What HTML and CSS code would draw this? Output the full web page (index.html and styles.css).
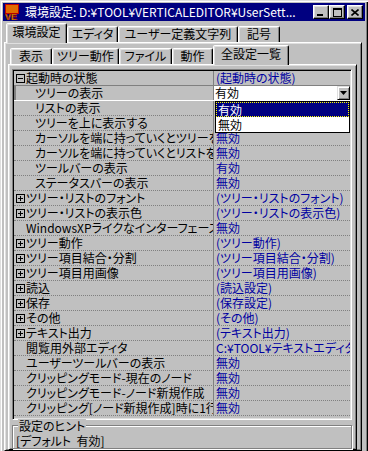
FILE: index.html
```html
<!DOCTYPE html>
<html lang="ja">
<head>
    <meta charset="UTF-8" />
    <title>環境設定</title>
    <link rel="stylesheet" href="styles.css">
</head>
<body>
<div class="window">
    <div class="titlebar">
        <svg class="app-icon" viewBox="0 0 16 16" width="16" height="16">
            <rect x="1" y="0" width="14" height="10" fill="#c00000"/>
            <path d="M3 1v8M5 1v8M7 1v8M9 1v8M11 1v8M13 1v8" stroke="#ffd800" stroke-width="1"/>
            <text x="1" y="15.5" font-family="Liberation Sans" font-size="9" font-weight="bold" fill="#ffd800" stroke="#900000" stroke-width="0.6">VE</text>
        </svg>
        <span class="title">環境設定: D:¥TOOL¥VERTICALEDITOR¥UserSett...</span>
        <div class="caption-buttons">
            <span class="cbtn min"><svg width="6" height="2"><rect width="6" height="2"/></svg></span>
            <span class="cbtn max"><svg width="9" height="9"><path d="M0 0h9v9H0z M1 2h7v6H1z" fill-rule="evenodd"/></svg></span>
            <span class="cbtn close"><svg width="8" height="7"><path d="M0.5 0.5l7 6M7.5 0.5l-7 6" stroke="#000" stroke-width="1.6"/></svg></span>
        </div>
    </div>

    <div class="tabs outer-tabs">
        <span class="tab active w-env">環境設定</span>
        <span class="tab w-edit">エディタ</span>
        <span class="tab w-user">ユーザー定義文字列</span>
        <span class="tab w-sym">記号</span>
    </div>

    <div class="panel outer-panel">
        <div class="tabs inner-tabs">
            <span class="tab w-view">表示</span>
            <span class="tab w-tree">ツリー動作</span>
            <span class="tab w-file">ファイル</span>
            <span class="tab w-act">動作</span>
            <span class="tab active w-all">全設定一覧</span>
        </div>

        <div class="panel inner-panel">
            <div class="grid">
                <div class="row"><span class="name group"><i class="toggle minus"></i>起動時の状態</span><span class="value">(起動時の状態)</span></div>
                <div class="row editing">
                    <span class="name child">ツリーの表示</span>
                    <span class="value combo">
                        <span class="combo-text">有効</span>
                        <span class="combo-btn"><svg width="7" height="4"><path d="M0 0h7l-3.5 4z"/></svg></span>
                        <span class="dropdown">
                            <span class="item selected">有効</span>
                            <span class="item">無効</span>
                        </span>
                    </span>
                </div>
                <div class="row"><span class="name child">リストの表示</span><span class="value">有効</span></div>
                <div class="row"><span class="name child">ツリーを上に表示する</span><span class="value">有効</span></div>
                <div class="row"><span class="name child">カーソルを端に持っていくとツリーを表示</span><span class="value">無効</span></div>
                <div class="row"><span class="name child">カーソルを端に持っていくとリストを表示</span><span class="value">無効</span></div>
                <div class="row"><span class="name child">ツールバーの表示</span><span class="value">有効</span></div>
                <div class="row"><span class="name child">ステータスバーの表示</span><span class="value">無効</span></div>
                <div class="row"><span class="name group"><i class="toggle"></i>ツリー・リストのフォント</span><span class="value">(ツリー・リストのフォント)</span></div>
                <div class="row"><span class="name group"><i class="toggle"></i>ツリー・リストの表示色</span><span class="value">(ツリー・リストの表示色)</span></div>
                <div class="row"><span class="name leaf">WindowsXPライクなインターフェースを使用</span><span class="value">無効</span></div>
                <div class="row"><span class="name group"><i class="toggle"></i>ツリー動作</span><span class="value">(ツリー動作)</span></div>
                <div class="row"><span class="name group"><i class="toggle"></i>ツリー項目結合・分割</span><span class="value">(ツリー項目結合・分割)</span></div>
                <div class="row"><span class="name group"><i class="toggle"></i>ツリー項目用画像</span><span class="value">(ツリー項目用画像)</span></div>
                <div class="row"><span class="name group"><i class="toggle"></i>読込</span><span class="value">(読込設定)</span></div>
                <div class="row"><span class="name group"><i class="toggle"></i>保存</span><span class="value">(保存設定)</span></div>
                <div class="row"><span class="name group"><i class="toggle"></i>その他</span><span class="value">(その他)</span></div>
                <div class="row"><span class="name group"><i class="toggle"></i>テキスト出力</span><span class="value">(テキスト出力)</span></div>
                <div class="row"><span class="name leaf">閲覧用外部エディタ</span><span class="value">C:¥TOOL¥テキストエディタ¥TextEditor.exe</span></div>
                <div class="row"><span class="name leaf">ユーザーツールバーの表示</span><span class="value">無効</span></div>
                <div class="row"><span class="name leaf">クリッピングモード-現在のノード</span><span class="value">無効</span></div>
                <div class="row"><span class="name leaf">クリッピングモード-ノード新規作成</span><span class="value">無効</span></div>
                <div class="row"><span class="name leaf">クリッピング[ノード新規作成]時に1行目をノード名にする</span><span class="value">無効</span></div>
            </div>

            <div class="hint">
                <span class="hint-label">設定のヒント</span>
                <div class="hint-text">[デフォルト&nbsp; 有効]</div>
            </div>
        </div>
    </div>
</div>
</body>
</html>
```

FILE: styles.css
```css
* {
    box-sizing: border-box;
}

body {
    margin: 0;
    background: #c0c0c0;
    font-family: "Noto Sans CJK JP", "Liberation Sans", sans-serif;
    font-size: 12px;
    line-height: 14px;
    font-feature-settings: "palt";
    color: #000;
}

.window {
    width: 368px;
    height: 451px;
    overflow: hidden;
    padding: 3px 3px 0 3px;
    display: flex;
    flex-direction: column;
    background: #c0c0c0;
    box-shadow: inset 1px 1px #dfdfdf, inset 2px 2px #fff, inset -1px 0 #000, inset -2px 0 #808080;
}

/* title bar */
.titlebar {
    height: 18px;
    flex: none;
    background: #000080;
    display: flex;
    align-items: center;
    padding-left: 1px;
}

.app-icon {
    flex: none;
    margin-right: 5px;
}

.title {
    flex: 1;
    color: #fff;
    white-space: nowrap;
    overflow-x: clip;
}

.caption-buttons {
    display: flex;
    margin-right: 2px;
}

.cbtn {
    width: 16px;
    height: 14px;
    background: #c0c0c0;
    border: 1px solid;
    border-color: #fff #000 #000 #fff;
    box-shadow: inset -1px -1px #808080, inset 1px 1px #dfdfdf;
    display: flex;
    align-items: center;
    justify-content: center;
}

.cbtn svg {
    display: block;
}

.cbtn.min {
    align-items: flex-end;
    justify-content: flex-start;
    padding: 0 0 2px 3px;
}

.cbtn.close {
    margin-left: 2px;
}

/* tabs */
.tabs {
    display: flex;
    align-items: flex-end;
    flex: none;
}

.outer-tabs {
    height: 21px;
    padding-left: 3px;
}

.inner-tabs {
    height: 20px;
    padding-left: 2px;
}

.tab {
    height: 16px;
    background: #c0c0c0;
    border: 1px solid;
    border-bottom: 0;
    border-color: #fff #000 transparent #fff;
    border-radius: 2px 2px 0 0;
    box-shadow: inset -1px 0 #808080, inset 1px 1px #dfdfdf;
    text-align: center;
    white-space: nowrap;
}

.tab.active {
    height: 20px;
    margin-bottom: -1px;
    padding-top: 1px;
    position: relative;
    z-index: 1;
}

.w-env { width: 61px; }
.w-edit { width: 51px; }
.w-user { width: 120px; }
.w-sym { width: 42px; }

.w-view { width: 42px; }
.w-tree { width: 67px; }
.w-file { width: 53px; }
.w-act { width: 41px; }
.w-all { width: 76px; }

/* panels */
.panel {
    border: 1px solid;
    border-color: #fff #000 #000 #fff;
    box-shadow: inset 1px 1px #dfdfdf, inset -1px -1px #808080;
    display: flex;
    flex-direction: column;
    flex: 1;
    min-height: 0;
}

.outer-panel {
    margin: 0 3px 0 1px;
    padding: 1px 4px 0 3px;
}

.inner-panel {
    padding: 4px 4px 0 3px;
}

/* settings grid */
.grid {
    flex: none;
    border: 1px solid;
    border-color: #808080 #fff #fff #808080;
    box-shadow: inset 1px 1px #000, inset -1px -1px #dfdfdf;
    padding: 1px 1px 3px 1px;
}

.row {
    display: flex;
    height: 15px;
    border-bottom: 1px dotted #808080;
}

.name {
    width: 200px;
    flex: none;
    display: flex;
    align-items: center;
    border-right: 1px solid #808080;
    white-space: nowrap;
    overflow-x: clip;
}

.name.group {
    padding-left: 2px;
}

.name.leaf {
    padding-left: 12px;
}

.name.child {
    padding-left: 21px;
}

.toggle {
    width: 9px;
    height: 9px;
    flex: none;
    margin-right: 1px;
    border: 1px solid #000;
    background:
        linear-gradient(#000, #000) center / 5px 1px no-repeat,
        linear-gradient(#000, #000) center / 1px 5px no-repeat;
}

.toggle.minus {
    background: linear-gradient(#000, #000) center / 5px 1px no-repeat;
}

.value {
    flex: 1;
    min-width: 0;
    padding-left: 2px;
    color: #0000a0;
    white-space: nowrap;
    overflow-x: clip;
}

/* row being edited */
.row.editing {
    height: 16px;
    margin-top: -1px;
    border-top: 1px solid #808080;
    border-bottom: 1px solid #fff;
}

.editing .name {
    box-shadow: inset 2px 0 #808080;
}

.combo {
    display: flex;
    padding-left: 1px;
    background: #fff;
    color: #000;
    overflow: visible;
    position: relative;
}

.combo-text {
    flex: 1;
}

.combo-btn {
    width: 13px;
    height: 14px;
    flex: none;
    background: #c0c0c0;
    border: 1px solid;
    border-color: #dfdfdf #000 #000 #dfdfdf;
    box-shadow: inset 1px 1px #fff, inset -1px -1px #808080;
    display: flex;
    align-items: center;
    justify-content: center;
}

.combo-btn svg {
    display: block;
}

.dropdown {
    position: absolute;
    top: 15px;
    left: 1px;
    right: 0;
    height: 32px;
    background: #fff;
    border: 1px solid #000;
    z-index: 5;
}

.dropdown .item {
    display: block;
    height: 15px;
    line-height: 13px;
    border: 1px solid transparent;
    padding-left: 1px;
}

.dropdown .item.selected {
    background: #000080;
    color: #fff;
    border: 1px dotted #ffff00;
}

/* hint box */
.hint {
    flex: 1;
    margin-top: 5px;
    border: 1px solid #808080;
    box-shadow: inset 1px 1px #fff, 1px 1px #fff;
}

.hint-label {
    display: inline-block;
    margin: -7px 0 0 5px;
    padding: 0 1px;
    background: #c0c0c0;
    vertical-align: top;
}

.hint-text {
    margin-top: -6px;
    padding-left: 3px;
}
```
